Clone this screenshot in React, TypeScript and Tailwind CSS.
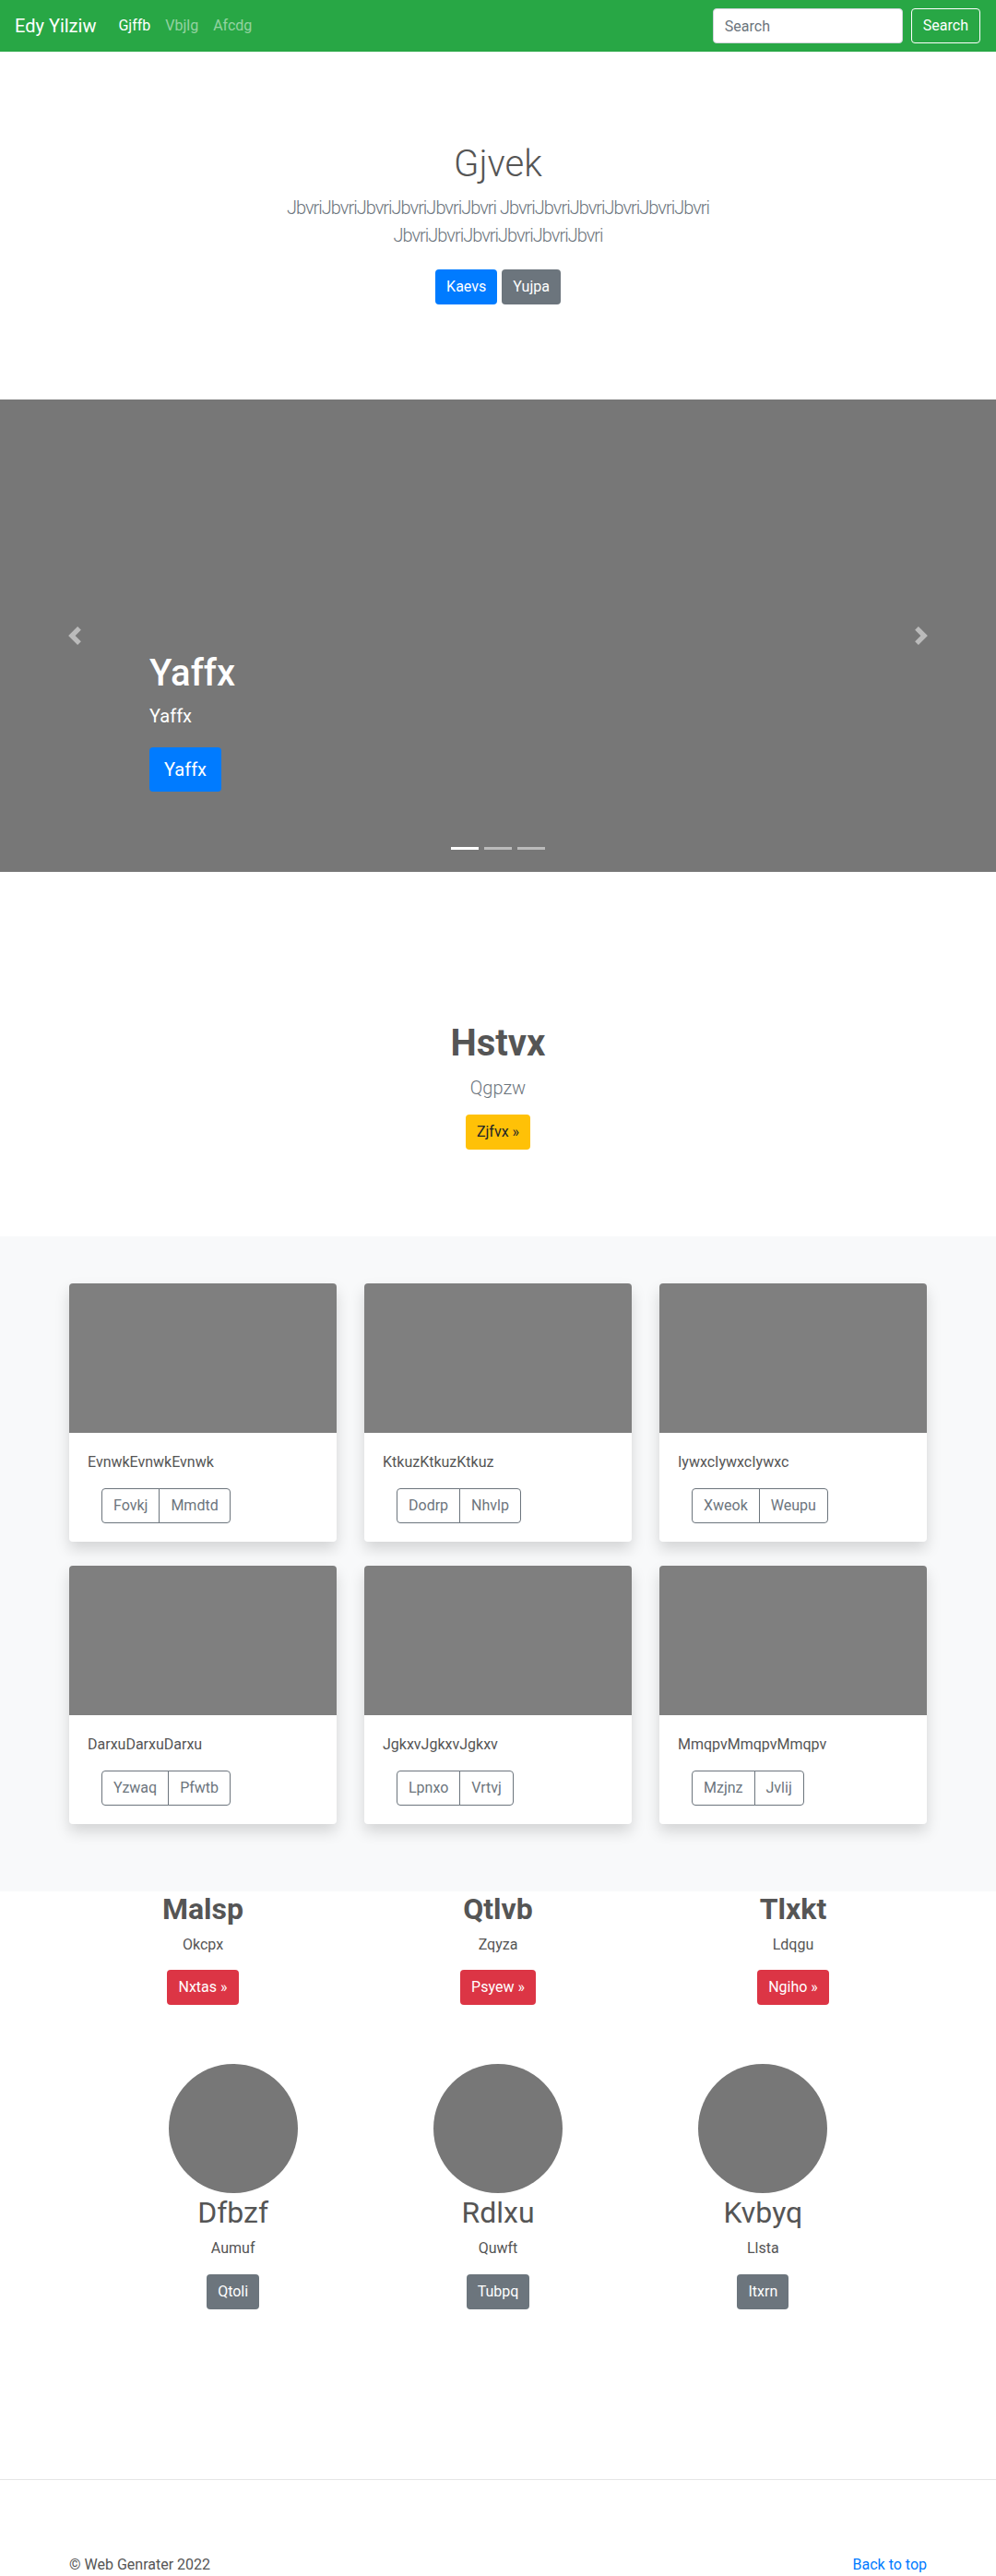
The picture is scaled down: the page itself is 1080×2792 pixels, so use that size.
import { useState } from 'react';

const cards = [
  { text: 'EvnwkEvnwkEvnwk', buttons: ['Fovkj', 'Mmdtd'] },
  { text: 'KtkuzKtkuzKtkuz', buttons: ['Dodrp', 'Nhvlp'] },
  { text: 'IywxcIywxcIywxc', buttons: ['Xweok', 'Weupu'] },
  { text: 'DarxuDarxuDarxu', buttons: ['Yzwaq', 'Pfwtb'] },
  { text: 'JgkxvJgkxvJgkxv', buttons: ['Lpnxo', 'Vrtvj'] },
  { text: 'MmqpvMmqpvMmqpv', buttons: ['Mzjnz', 'Jvlij'] },
];

const features = [
  { title: 'Malsp', text: 'Okcpx', cta: 'Nxtas »' },
  { title: 'Qtlvb', text: 'Zqyza', cta: 'Psyew »' },
  { title: 'Tlxkt', text: 'Ldqgu', cta: 'Ngiho »' },
];

const people = [
  { name: 'Dfbzf', text: 'Aumuf', cta: 'Qtoli' },
  { name: 'Rdlxu', text: 'Quwft', cta: 'Tubpq' },
  { name: 'Kvbyq', text: 'Llsta', cta: 'Itxrn' },
];

const Navbar = () => (
  <nav className="flex h-[56px] items-center justify-between bg-[#28a745] pl-4 pr-[17px]">
    <div className="flex items-center">
      <a className="mr-4 text-[20px] leading-[30px] text-white" href="#">
        Edy Yilziw
      </a>
      <a className="px-2 text-white" href="#">Gjffb</a>
      <a className="px-2 text-white/50" href="#">Vbjlg</a>
      <a className="px-2 text-white/50" href="#">Afcdg</a>
    </div>
    <form className="flex items-center" onSubmit={(e) => e.preventDefault()}>
      <input
        className="mr-[9px] h-[38px] w-[206px] rounded border border-[#ced4da] bg-white px-3 text-[#495057] placeholder:text-[#6c757d]"
        placeholder="Search"
        type="search"
      />
      <button className="h-[38px] rounded border border-white px-3 text-white" type="submit">
        Search
      </button>
    </form>
  </nav>
);

const Hero = () => (
  <section className="pb-[103px] pt-[98px] text-center">
    <h1 className="mb-2 text-[40px] font-light leading-[1.2] text-[#555]">Gjvek</h1>
    <p className="mx-auto max-w-[540px] text-[20px] font-light leading-[1.5] tracking-[-1px] text-[#6c757d]">
      JbvriJbvriJbvriJbvriJbvriJbvri JbvriJbvriJbvriJbvriJbvriJbvri JbvriJbvriJbvriJbvriJbvriJbvri
    </p>
    <div className="mt-[22px] flex justify-center gap-[5px]">
      <a className="flex h-[38px] items-center rounded bg-[#007bff] px-3 text-white" href="#">Kaevs</a>
      <a className="flex h-[38px] items-center rounded bg-[#6c757d] px-3 text-white" href="#">Yujpa</a>
    </div>
  </section>
);

const Carousel = () => {
  const [active, setActive] = useState(0);

  return (
    <div className="relative h-[512px] bg-[#777]">
      <button
        className="absolute inset-y-0 left-0 flex w-[15%] items-center justify-center opacity-50"
        onClick={() => setActive((v) => (v + 2) % 3)}
        type="button"
      >
        <svg className="h-5 w-5" fill="#fff" viewBox="0 0 8 8">
          <path d="M5.25 0l-4 4 4 4 1.5-1.5-2.5-2.5 2.5-2.5-1.5-1.5z" />
        </svg>
      </button>
      <button
        className="absolute inset-y-0 right-0 flex w-[15%] items-center justify-center opacity-50"
        onClick={() => setActive((v) => (v + 1) % 3)}
        type="button"
      >
        <svg className="h-5 w-5" fill="#fff" viewBox="0 0 8 8">
          <path d="M2.75 0l-1.5 1.5 2.5 2.5-2.5 2.5 1.5 1.5 4-4-4-4z" />
        </svg>
      </button>
      <div className="absolute bottom-[51px] left-[15%] right-[15%] pb-5 pt-5 text-left text-white">
        <h1 className="mb-2 text-[40px] font-medium leading-[1.2]">Yaffx</h1>
        <p className="mb-5 text-[20px] leading-[1.4]">Yaffx</p>
        <p className="mb-4">
          <a className="inline-flex h-[48px] items-center rounded bg-[#007bff] px-4 text-[20px]" href="#">
            Yaffx
          </a>
        </p>
      </div>
      <ol className="absolute bottom-[24px] left-0 right-0 flex justify-center">
        {[0, 1, 2].map((i) => (
          <li
            className={`mx-[3px] h-[3px] w-[30px] cursor-pointer bg-white ${i === active ? '' : 'opacity-50'}`}
            key={i}
            onClick={() => setActive(i)}
          />
        ))}
      </ol>
    </div>
  );
};

const Callout = () => (
  <section className="pb-[94px] pt-[162px] text-center">
    <h1 className="text-[40px] font-bold leading-[1.2] text-[#555]">Hstvx</h1>
    <p className="mt-[9px] text-[20px] font-light leading-[1.5] text-[#6c757d]">Qgpzw</p>
    <div className="mt-[14px] flex justify-center">
      <a className="flex h-[38px] items-center rounded bg-[#ffc107] px-3 text-[#212529]" href="#">
        Zjfvx »
      </a>
    </div>
  </section>
);

const Album = () => (
  <section className="bg-[#f8f9fa] pb-[73px] pt-[51px]">
    <div className="mx-auto grid w-[960px] grid-cols-3 gap-y-[26px]">
      {cards.map((card) => (
        <div className="px-[15px]" key={card.text}>
          <div className="overflow-hidden rounded bg-white shadow-[0_0.5rem_1rem_rgba(0,0,0,0.15)]">
            <div className="h-[162px] bg-[#7f7f7f]" />
            <div className="p-5">
              <p className="mb-4 leading-6 text-[#555]">{card.text}</p>
              <div className="ml-[15px] flex">
                {card.buttons.map((label, i) => (
                  <button
                    className={`h-[38px] border border-[#6c757d] px-3 text-[#6c757d] ${
                      i === 0 ? 'rounded-l' : '-ml-px rounded-r'
                    }`}
                    key={label}
                    type="button"
                  >
                    {label}
                  </button>
                ))}
              </div>
            </div>
          </div>
        </div>
      ))}
    </div>
  </section>
);

const Features = () => (
  <section className="mx-auto grid w-[960px] grid-cols-3 text-center">
    {features.map((f) => (
      <div className="px-[15px]" key={f.title}>
        <h2 className="mb-2 text-[32px] font-bold leading-[1.2] text-[#555]">{f.title}</h2>
        <p className="leading-6 text-[#555]">{f.text}</p>
        <div className="mt-[15px] flex justify-center">
          <a className="flex h-[38px] items-center rounded bg-[#dc3545] px-3 text-white" href="#">
            {f.cta}
          </a>
        </div>
      </div>
    ))}
  </section>
);

const People = () => (
  <section className="mx-auto mt-[64px] grid w-[862px] grid-cols-3 text-center">
    {people.map((p) => (
      <div className="flex flex-col items-center" key={p.name}>
        <div className="h-[140px] w-[140px] rounded-full bg-[#777]" />
        <h2 className="mt-[2px] text-[32px] leading-[1.2] text-[#555]">{p.name}</h2>
        <p className="mt-[7px] leading-6 text-[#555]">{p.text}</p>
        <a className="mt-4 flex h-[38px] items-center rounded bg-[#6c757d] px-3 text-white" href="#">
          {p.cta}
        </a>
      </div>
    ))}
  </section>
);

export default function App() {
  return (
    <div className="font-['Roboto',sans-serif] text-base">
      <Navbar />
      <Hero />
      <Carousel />
      <Callout />
      <Album />
      <Features />
      <People />
      <hr className="mt-[184px] border-t border-[#e5e5e5]" />
      <footer className="mx-auto mt-[80px] flex w-[960px] justify-between px-[15px] leading-6">
        <p className="text-[#555]">© Web Genrater 2022</p>
        <a className="text-[#007bff]" href="#">Back to top</a>
      </footer>
    </div>
  );
}
